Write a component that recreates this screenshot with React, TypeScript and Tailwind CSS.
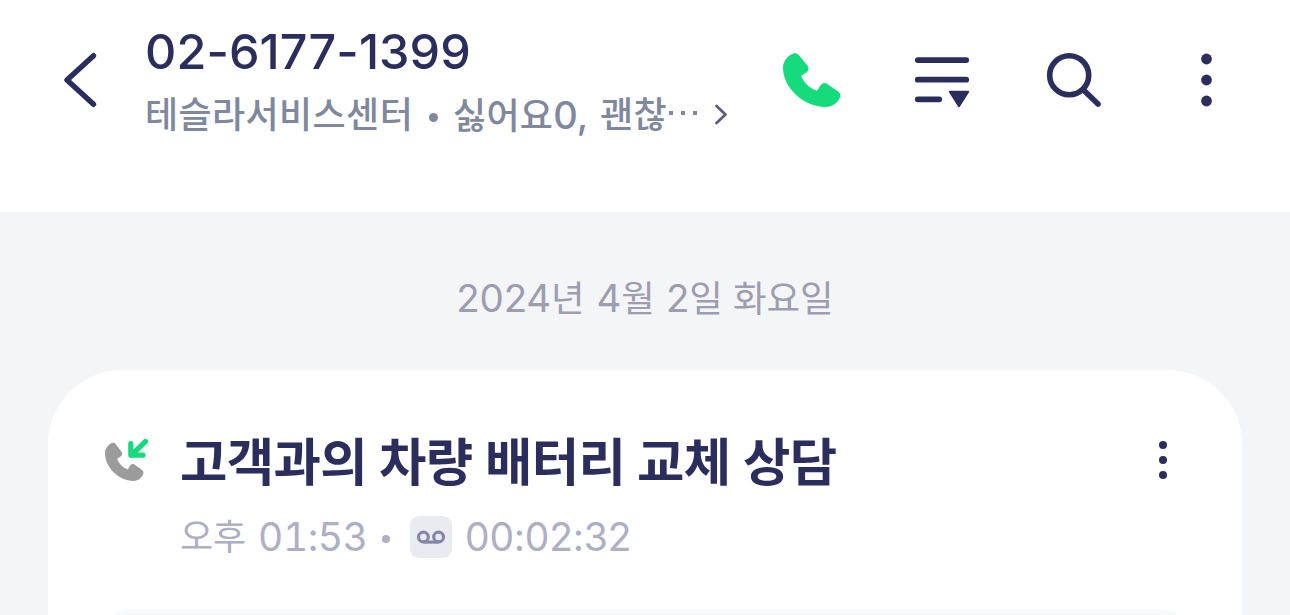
import React from 'react';

interface IconProps {
  className?: string;
}

const PhoneIcon: React.FC<IconProps> = ({ className }) => (
  <svg viewBox="0 0 58 54" className={className} fill="currentColor">
    <path d="M8.5 1.2C11 -.4 14 -.2 16 2.2L24.3 12.4C26 14.6 25.8 17.3 23.8 19.2L18.2 22.8C20.5 29.5 26.5 35.2 34 37.8L37.6 32.2C39 30 41.7 29.4 44 30.7L54.5 38C57.6 40.2 58.2 42.8 56.5 45.6C53.4 51.2 48.5 54 42.5 54C20 53.7 .2 34.5 0 15C0 9 3 4.5 8.5 1.2Z" />
  </svg>
);

const MoreIcon: React.FC<IconProps> = ({ className }) => (
  <svg viewBox="0 0 12 54" className={className} fill="currentColor">
    <circle cx="6.5" cy="6" r="5.4" />
    <circle cx="6.5" cy="27" r="5.4" />
    <circle cx="6.5" cy="48" r="5.4" />
  </svg>
);

const Header: React.FC = () => (
  <header className="flex h-[212px] items-start bg-white text-[#2b2e5c]">
    {/* Back */}
    <button className="mt-[52px] ml-[64px] h-14 w-[34px] shrink-0">
      <svg viewBox="0 0 34 56" className="h-14 w-[34px]" fill="none" stroke="currentColor" strokeWidth="5.4" strokeLinecap="round" strokeLinejoin="round">
        <path d="M29.5 3.7L3 28L29.5 52.3" />
      </svg>
    </button>

    {/* Contact */}
    <div className="ml-[47px] w-[638px] shrink-0 whitespace-nowrap">
      <h1 className="mt-[22px] h-[60px] text-[48.5px] leading-[60px] font-medium tracking-[0.1px]">02-6177-1399</h1>
      <div className="mt-[6px] flex h-[54px] items-center text-[36px] leading-[54px] font-medium text-[#80889d]">
        <span className="w-[268px] tracking-[0.4px]">테슬라서비스센터</span>
        <span className="mt-[5px] ml-[15.5px] size-[9px] rounded-full bg-[#80889d]" />
        <span className="ml-[15.5px] w-[133px]">
          <span className="tracking-[0.3px]">싫어요</span>
          <span className="text-[38px]">0,</span>
        </span>
        <span className="ml-[14px] w-[69px] tracking-[0.4px]">괜찮</span>
        <span className="mb-[5px] flex w-[28px] justify-between">
          <span className="size-[4px] bg-[#80889d]" />
          <span className="size-[4px] bg-[#80889d]" />
          <span className="size-[4px] bg-[#80889d]" />
        </span>
        <svg viewBox="0 0 14 22" className="ml-[17px] h-[22px] w-[14px] text-[#5b5c7e]" fill="none" stroke="currentColor" strokeWidth="2.7" strokeLinecap="round" strokeLinejoin="round">
          <path d="M2.5 2L11.5 10.5L2.5 19" />
        </svg>
      </div>
    </div>

    {/* Actions */}
    <button className="mt-[53px] h-[54px] w-[58px] shrink-0 text-[#16db7d]">
      <PhoneIcon className="h-[54px] w-[58px]" />
    </button>
    <button className="mt-[56px] ml-[73px] h-[54px] w-[56px] shrink-0">
      <svg viewBox="0 0 56 54" className="h-[54px] w-[56px]" fill="none" stroke="currentColor" strokeWidth="5.8" strokeLinecap="round">
        <path d="M3.8 4.1H52.2M3.8 23.7H52.2M3.8 43.3H25.2" />
        <path d="M35.8 35.8H54.2L45 50.2Z" fill="currentColor" strokeWidth="2" strokeLinejoin="round" />
      </svg>
    </button>
    <button className="mt-[52px] ml-[76px] h-14 w-14 shrink-0">
      <svg viewBox="0 0 56 56" className="h-14 w-14" fill="none" stroke="currentColor" strokeWidth="5.6" strokeLinecap="round">
        <circle cx="23.2" cy="23.2" r="19.5" />
        <path d="M37.5 38L52 52" />
      </svg>
    </button>
    <button className="mt-[53px] ml-[98px] h-[54px] w-3 shrink-0">
      <MoreIcon className="h-[54px] w-3" />
    </button>
  </header>
);

const CallCard: React.FC = () => (
  <section className="mx-12 mt-[48px] h-[245px] overflow-hidden rounded-t-[74px] bg-white text-[#2b2e5c]">
    <div className="flex h-[239px] items-start">
      {/* Incoming call */}
      <svg viewBox="0 0 44 44" className="mt-[68px] ml-[57px] h-11 w-11 shrink-0">
        <g transform="translate(0 4.6) scale(.67 .71)" fill="#9b9b9b">
          <path d="M8.5 1.2C11 -.4 14 -.2 16 2.2L24.3 12.4C26 14.6 25.8 17.3 23.8 19.2L18.2 22.8C20.5 29.5 26.5 35.2 34 37.8L37.6 32.2C39 30 41.7 29.4 44 30.7L54.5 38C57.6 40.2 58.2 42.8 56.5 45.6C53.4 51.2 48.5 54 42.5 54C20 53.7 .2 34.5 0 15C0 9 3 4.5 8.5 1.2Z" />
        </g>
        <path d="M40.5 3.5L26 17.3M25.8 5.5V17.1H38" fill="none" stroke="#16db7d" strokeWidth="5.2" strokeLinecap="round" strokeLinejoin="round" />
      </svg>

      <div className="ml-[31px] w-[940px] shrink-0 whitespace-nowrap">
        <h2 className="mt-[54px] flex h-[76px] text-[51.5px] leading-[76px] font-bold tracking-[-0.6px]">
          <span className="w-[199px]">고객과의</span>
          <span className="w-[106px]">차량</span>
          <span className="w-[152px]">배터리</span>
          <span className="w-[106px]">교체</span>
          <span>상담</span>
        </h2>
        <div className="mt-[10px] flex h-[54px] items-center text-[39px] text-[#aeaec4]">
          <span className="w-[78px] text-[36px]">오후</span>
          <span className="w-[108px] tracking-[-0.4px] tabular-nums">01:53</span>
          <span className="mt-[4px] ml-[16px] size-[8px] rounded-full bg-[#aeaec4]" />
          <span className="ml-[20px] flex size-[42px] items-center justify-center rounded-[9px] bg-[#eaebf0]">
            <svg viewBox="0 0 28 14" className="h-[14px] w-7" fill="none" stroke="#8587a8" strokeWidth="3.2">
              <circle cx="6.4" cy="7" r="4.9" />
              <circle cx="21.6" cy="7" r="4.9" />
              <path d="M6.4 12.1H21.6" />
            </svg>
          </span>
          <span className="ml-[13px] tracking-[-0.2px]">00:02:32</span>
        </div>
      </div>

      <button className="mt-[70px] ml-[38px] h-10 w-[10px] shrink-0">
        <svg viewBox="0 0 10 40" className="h-10 w-[10px]" fill="currentColor">
          <circle cx="5" cy="5" r="4" />
          <circle cx="5" cy="20" r="4" />
          <circle cx="5" cy="35" r="4" />
        </svg>
      </button>
    </div>
    <div className="mx-12 h-[60px] rounded-t-[36px] bg-[#f8f9fb]" />
  </section>
);

export default function App() {
  return (
    <main className="h-[615px] w-[1290px] overflow-hidden bg-[#f3f5f7] font-['Inter','Noto_Sans_CJK_KR',sans-serif]">
      <Header />
      <div className="flex h-[110px] items-end justify-center">
        <p className="flex h-[48px] items-baseline text-[38.5px] leading-[48px] whitespace-nowrap text-[#9d9db0]">
          <span className="tracking-[-0.2px]">2024<span className="text-[36.5px]">년</span></span>
          <span className="ml-[12px]">4<span className="text-[36.5px]">월</span></span>
          <span className="ml-[11px]">2<span className="text-[36.5px]">일</span></span>
          <span className="ml-[10px] text-[36.5px]">화요일</span>
        </p>
      </div>
      <CallCard />
    </main>
  );
}
